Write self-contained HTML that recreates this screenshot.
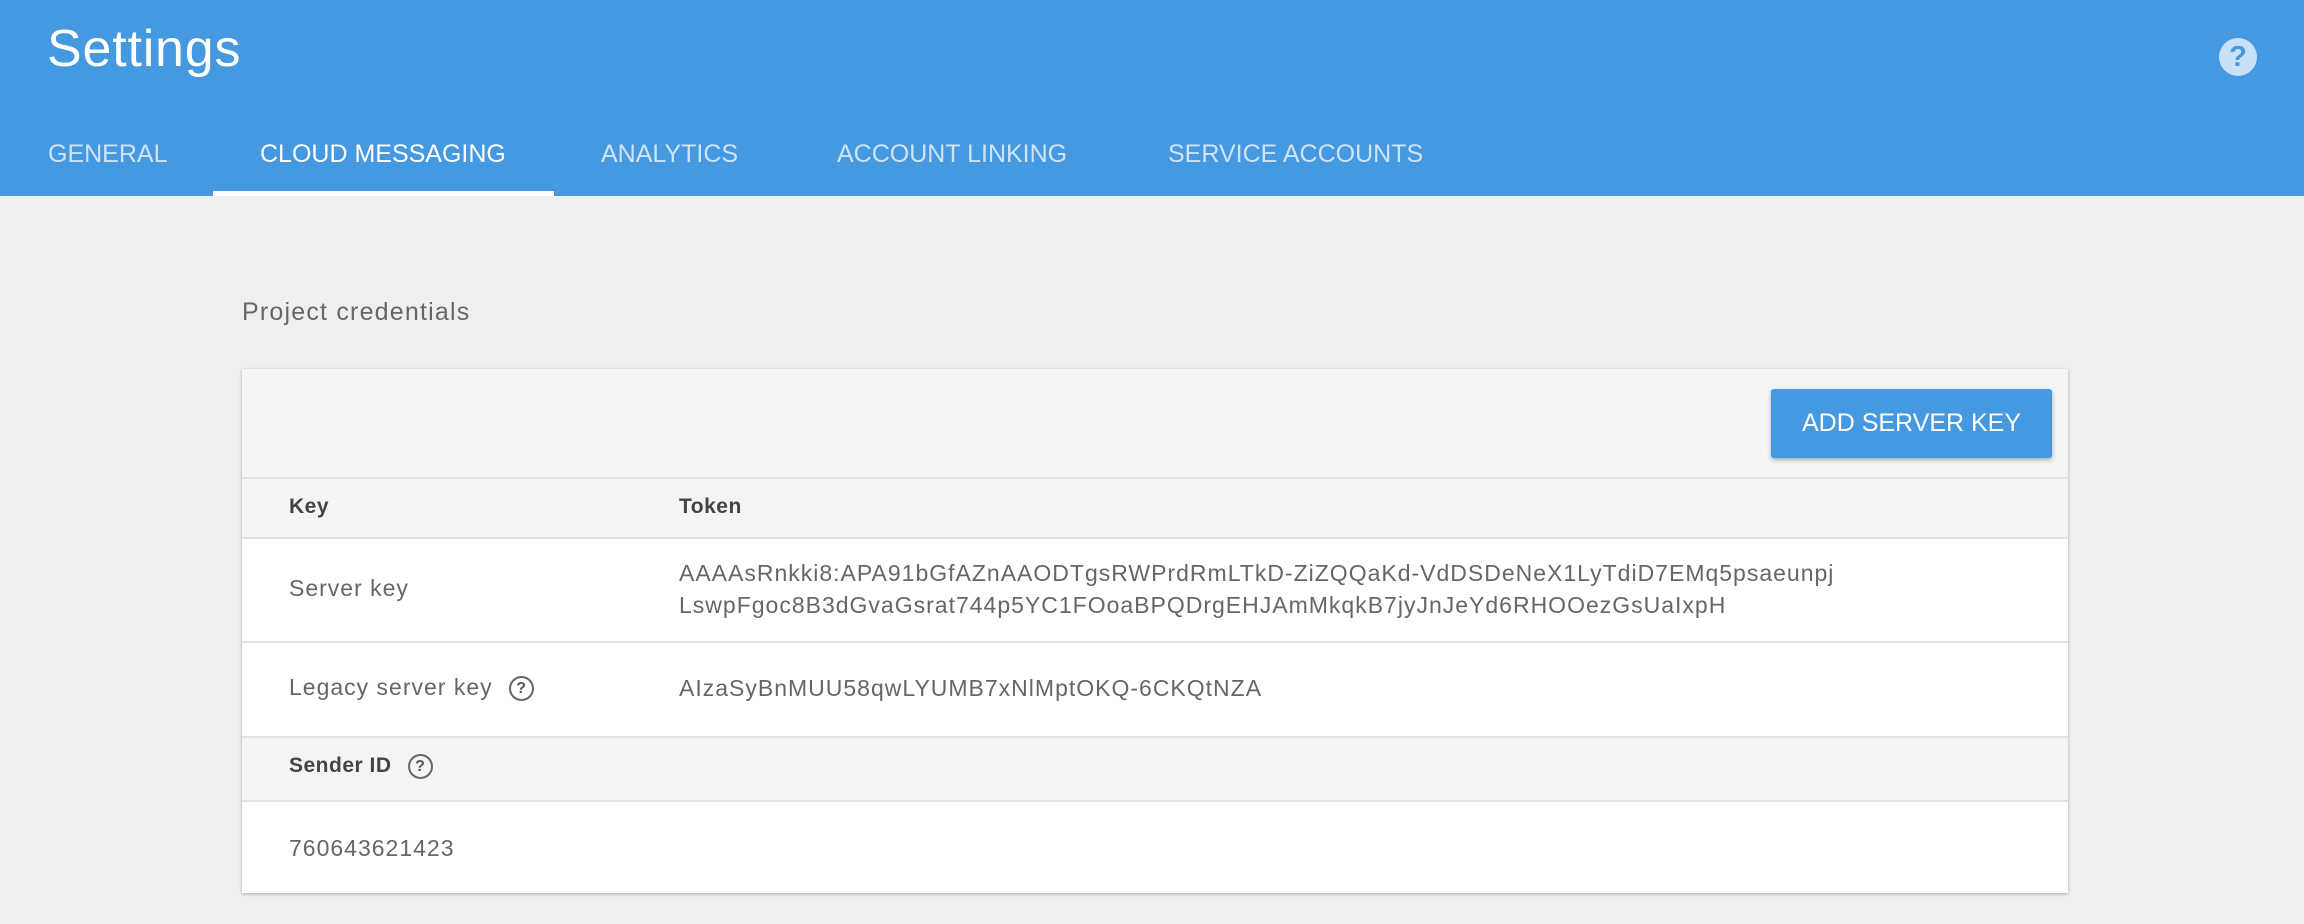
<!DOCTYPE html>
<html><head><meta charset="utf-8"><style>
*{margin:0;padding:0;box-sizing:border-box}
body{width:2304px;height:924px;background:#eeeff1;font-family:"Liberation Sans",sans-serif;position:relative;overflow:hidden}
.hdr{position:absolute;left:0;top:0;width:2304px;height:196px;background:#4599e0}
.title{position:absolute;left:47px;top:19px;font-size:52px;color:#fff;letter-spacing:0.8px}
.tab{position:absolute;top:140px;font-size:25px;color:#cfe3f7;white-space:nowrap}
.tab.on{color:#fff}
.ul{position:absolute;left:213px;top:191px;width:341px;height:5px;background:#fff}
.help{position:absolute;left:2219px;top:38px;width:38px;height:38px;border-radius:50%;background:#c9e1f6;color:#4599e0;font-weight:bold;font-size:29px;text-align:center;line-height:38px}
.pc{position:absolute;left:242px;top:298px;font-size:25px;color:#666;letter-spacing:1.2px}
.card{position:absolute;left:242px;top:369px;width:1826px;height:524px;background:#fff;box-shadow:0 1px 3px rgba(0,0,0,.3)}
.row{position:absolute;left:0;width:1826px;border-top:2px solid #e2e2e2}
.g{background:#f4f4f4}
.btn{position:absolute;left:1529px;top:20px;width:281px;height:69px;background:#4599e0;border-radius:3px;box-shadow:0 2px 4px rgba(0,0,0,.3);color:#fff;font-size:25px;text-align:center;line-height:69px}
.t{position:absolute;font-size:23px;color:#666;white-space:nowrap;letter-spacing:1px}
.b{font-weight:bold;color:#444;font-size:21px;letter-spacing:0.5px}
.q{display:inline-block;width:25px;height:25px;border:2px solid #666;border-radius:50%;font-size:16px;text-align:center;line-height:21px;vertical-align:middle;margin-left:16px;color:#555;font-weight:bold;letter-spacing:0}
</style></head><body>
<div class="hdr">
<div class="title">Settings</div>
<div class="help">?</div>
<div class="tab" style="left:48px">GENERAL</div>
<div class="tab on" style="left:260px">CLOUD MESSAGING</div>
<div class="tab" style="left:601px">ANALYTICS</div>
<div class="tab" style="left:837px">ACCOUNT LINKING</div>
<div class="tab" style="left:1168px">SERVICE ACCOUNTS</div>
<div class="ul"></div>
</div>
<div class="pc">Project credentials</div>
<div class="card">
<div class="row g" style="top:0;height:108px;border-top:none"><div class="btn">ADD SERVER KEY</div></div>
<div class="row g" style="top:108px;height:60px"><div class="t b" style="left:47px;top:16px">Key</div><div class="t b" style="left:437px;top:16px">Token</div></div>
<div class="row" style="top:168px;height:104px"><div class="t" style="left:47px;top:36px">Server key</div>
<div class="t" style="left:437px;top:18px;line-height:32px">AAAAsRnkki8:APA91bGfAZnAAODTgsRWPrdRmLTkD-ZiZQQaKd-VdDSDeNeX1LyTdiD7EMq5psaeunpj<br>LswpFgoc8B3dGvaGsrat744p5YC1FOoaBPQDrgEHJAmMkqkB7jyJnJeYd6RHOOezGsUaIxpH</div></div>
<div class="row" style="top:272px;height:95px"><div class="t" style="left:47px;top:31px">Legacy server key<span class="q">?</span></div><div class="t" style="left:437px;top:32px">AIzaSyBnMUU58qwLYUMB7xNlMptOKQ-6CKQtNZA</div></div>
<div class="row g" style="top:367px;height:64px"><div class="t b" style="left:47px;top:16px">Sender ID<span class="q">?</span></div></div>
<div class="row" style="top:431px;height:93px"><div class="t" style="left:47px;top:33px">760643621423</div></div>
</div>
</body></html>
